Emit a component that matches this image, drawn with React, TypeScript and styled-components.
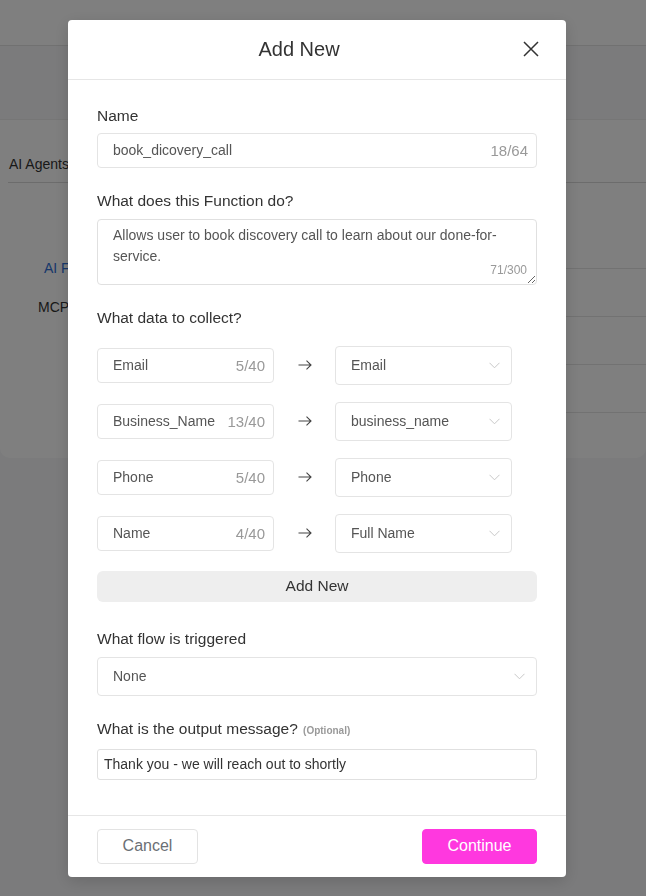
import React from 'react';
import styled, { createGlobalStyle } from 'styled-components';

const GlobalStyle = createGlobalStyle`
  * {
    box-sizing: border-box;
  }
  body {
    margin: 0;
    background: #f6f7f9;
    font-family: 'Liberation Sans', Arial, sans-serif;
    color: #333;
  }
`;

// ---------- page behind the dialog ----------

const Page = styled.div`
  min-height: 896px;
`;

const TopBar = styled.div`
  height: 46px;
  background: #fff;
  border-bottom: 1px solid #e3e3e3;
`;

const Content = styled.div`
  padding-top: 73px;
`;

const Card = styled.div`
  height: 339px;
  background: #fff;
  border-top: 1px solid #ececec;
  border-radius: 0 0 10px 10px;
  overflow: hidden;
`;

const Tabs = styled.div`
  height: 63px;
  margin: 0 0 0 8px;
  display: flex;
  align-items: flex-end;
  border-bottom: 1px solid #d9d9d9;
`;

const Tab = styled.div`
  font-size: 14px;
  line-height: 16px;
  padding: 0 0 10px 1px;
  color: #333;
`;

const CardBody = styled.div`
  display: grid;
  grid-template-columns: 220px 1fr;
`;

const Side = styled.div`
  padding-top: 66px;
`;

const SideItem = styled.div<{ $active?: boolean; $indent: number }>`
  height: 39px;
  line-height: 39px;
  font-size: 14px;
  padding-left: ${(p) => p.$indent}px;
  color: ${(p) => (p.$active ? '#2f6fd6' : '#333')};
  white-space: nowrap;
`;

const Table = styled.div`
  padding-top: 38px;
`;

const TableRow = styled.div`
  height: 48px;
  border-bottom: 1px solid #e4e4e4;
`;

// ---------- dialog ----------

const Overlay = styled.div`
  position: fixed;
  inset: 0;
  background: rgba(0, 0, 0, 0.5);
  display: flex;
  align-items: center;
  justify-content: center;
  padding-right: 12px;
`;

const Modal = styled.div`
  width: 498px;
  background: #fff;
  border-radius: 4px;
  box-shadow: 0 4px 16px rgba(0, 0, 0, 0.15);
`;

const Header = styled.div`
  height: 60px;
  display: flex;
  align-items: center;
  padding-left: 27px;
  border-bottom: 1px solid #e6e6e6;
`;

const Title = styled.h2`
  flex: 1;
  margin: 0;
  text-align: center;
  font-size: 20px;
  font-weight: 400;
  color: #333;
`;

const CloseButton = styled.button`
  width: 56px;
  height: 58px;
  margin-right: 7px;
  border: none;
  background: none;
  padding: 0;
  display: flex;
  align-items: center;
  justify-content: center;
  color: #333;
`;

const Body = styled.div`
  padding: 27px 29px 35px;
`;

const Section = styled.div<{ $gap?: number }>`
  margin-bottom: ${(p) => p.$gap ?? 24}px;
  &:last-child {
    margin-bottom: 0;
  }
`;

const Label = styled.div<{ $mb?: number }>`
  font-size: 15.5px;
  line-height: 18px;
  color: #333;
  margin-bottom: ${(p) => p.$mb ?? 8}px;
`;

const Optional = styled.span`
  font-size: 10px;
  color: #999;
  font-weight: 700;
  margin-left: 1px;
`;

const FieldBox = styled.div<{ $width?: number; $height: number }>`
  position: relative;
  width: ${(p) => (p.$width ? `${p.$width}px` : '100%')};
  height: ${(p) => p.$height}px;
  border: 1px solid #e4e4e4;
  border-radius: 4px;
  display: flex;
  align-items: center;
  background: #fff;
`;

const TextInput = styled.input`
  flex: 1;
  min-width: 0;
  height: 100%;
  border: none;
  outline: none;
  background: transparent;
  padding: 0 0 0 15px;
  font-family: inherit;
  font-size: 14px;
  color: #555;
`;

const Count = styled.span`
  font-size: 15px;
  color: #999;
  padding: 0 8px 0 4px;
  white-space: nowrap;
`;

const AreaWrap = styled.div`
  position: relative;
  width: 440px;
`;

const TextArea = styled.textarea`
  display: block;
  width: 440px;
  height: 66px;
  border: 1px solid #e0e0e0;
  border-radius: 4px;
  padding: 5px 15px;
  font-family: inherit;
  font-size: 14px;
  line-height: 21px;
  color: #555;
  resize: vertical;
  outline: none;
`;

const AreaCount = styled.span`
  position: absolute;
  right: 10px;
  bottom: 8px;
  font-size: 12px;
  color: #999;
`;

const DataRows = styled.div`
  display: flex;
  flex-direction: column;
  gap: 17px;
`;

const DataRow = styled.div`
  display: flex;
  align-items: center;
`;

const ArrowCell = styled.div`
  width: 61px;
  display: flex;
  justify-content: center;
  color: #555;
`;

const SelectBox = styled.div<{ $width?: number }>`
  width: ${(p) => (p.$width ? `${p.$width}px` : '100%')};
  height: 39px;
  border: 1px solid #e4e4e4;
  border-radius: 4px;
  display: flex;
  align-items: center;
  justify-content: space-between;
  padding: 0 11px 0 15px;
  font-size: 14px;
  color: #555;
`;

const AddButton = styled.button`
  display: block;
  width: 100%;
  height: 31px;
  border: none;
  border-radius: 6px;
  background: #eeeeee;
  font-family: inherit;
  font-size: 15.5px;
  color: #333;
`;

const PlainInput = styled.input`
  display: block;
  width: 100%;
  height: 31px;
  border: 1px solid #e0e0e0;
  border-radius: 3px;
  padding: 0 6px;
  font-family: inherit;
  font-size: 14px;
  color: #333;
  outline: none;
`;

const Footer = styled.div`
  height: 62px;
  border-top: 1px solid #e6e6e6;
  display: flex;
  align-items: center;
  justify-content: space-between;
  padding: 0 29px;
`;

const FooterButton = styled.button<{ $primary?: boolean }>`
  height: 35px;
  width: ${(p) => (p.$primary ? 115 : 101)}px;
  border-radius: 4px;
  border: 1px solid ${(p) => (p.$primary ? '#ff38df' : '#e3e3e3')};
  background: ${(p) => (p.$primary ? '#ff38df' : '#fff')};
  color: ${(p) => (p.$primary ? '#fff' : '#6b6f75')};
  font-family: inherit;
  font-size: 16px;
`;

const Chevron = () => (
  <svg width="11" height="7" viewBox="0 0 11 7" fill="none">
    <polyline points="0.5,0.8 5.5,5.8 10.5,0.8" stroke="#c8c8c8" strokeWidth="1" />
  </svg>
);

const Arrow = () => (
  <svg width="14" height="10" viewBox="0 0 14 10" fill="none">
    <path d="M0.5 5H13M8.5 0.7L13 5L8.5 9.3" stroke="#444" strokeWidth="1.1" />
  </svg>
);

const CloseIcon = () => (
  <svg width="16" height="16" viewBox="0 0 16 16" fill="none">
    <path d="M1 1L15 15M15 1L1 15" stroke="#333" strokeWidth="1.5" />
  </svg>
);

const dataFields = [
  { name: 'Email', count: '5/40', target: 'Email' },
  { name: 'Business_Name', count: '13/40', target: 'business_name' },
  { name: 'Phone', count: '5/40', target: 'Phone' },
  { name: 'Name', count: '4/40', target: 'Full Name' },
];

const App = () => {
  return (
    <>
      <GlobalStyle />
      <Page>
        <TopBar />
        <Content>
          <Card>
            <Tabs>
              <Tab>AI Agents</Tab>
            </Tabs>
            <CardBody>
              <Side>
                <SideItem $active $indent={44}>AI Functions</SideItem>
                <SideItem $indent={38}>MCP</SideItem>
              </Side>
              <Table>
                <TableRow />
                <TableRow />
                <TableRow />
                <TableRow />
              </Table>
            </CardBody>
          </Card>
        </Content>
      </Page>

      <Overlay>
        <Modal>
          <Header>
            <Title>Add New</Title>
            <CloseButton aria-label="Close">
              <CloseIcon />
            </CloseButton>
          </Header>

          <Body>
            <Section>
              <Label>Name</Label>
              <FieldBox $height={35}>
                <TextInput defaultValue="book_dicovery_call" />
                <Count>18/64</Count>
              </FieldBox>
            </Section>

            <Section>
              <Label $mb={9}>What does this Function do?</Label>
              <AreaWrap>
                <TextArea defaultValue="Allows user to book discovery call to learn about our done-for-service." />
                <AreaCount>71/300</AreaCount>
              </AreaWrap>
            </Section>

            <Section $gap={18}>
              <Label $mb={19}>What data to collect?</Label>
              <DataRows>
                {dataFields.map((f) => (
                  <DataRow key={f.name}>
                    <FieldBox $width={177} $height={35}>
                      <TextInput defaultValue={f.name} />
                      <Count>{f.count}</Count>
                    </FieldBox>
                    <ArrowCell>
                      <Arrow />
                    </ArrowCell>
                    <SelectBox $width={177}>
                      <span>{f.target}</span>
                      <Chevron />
                    </SelectBox>
                  </DataRow>
                ))}
              </DataRows>
            </Section>

            <Section $gap={28}>
              <AddButton>Add New</AddButton>
            </Section>

            <Section>
              <Label $mb={9}>What flow is triggered</Label>
              <SelectBox>
                <span>None</span>
                <Chevron />
              </SelectBox>
            </Section>

            <Section>
              <Label $mb={9}>
                What is the output message? <Optional>(Optional)</Optional>
              </Label>
              <PlainInput defaultValue="Thank you - we will reach out to shortly" />
            </Section>
          </Body>

          <Footer>
            <FooterButton>Cancel</FooterButton>
            <FooterButton $primary>Continue</FooterButton>
          </Footer>
        </Modal>
      </Overlay>
    </>
  );
};

export default App;
